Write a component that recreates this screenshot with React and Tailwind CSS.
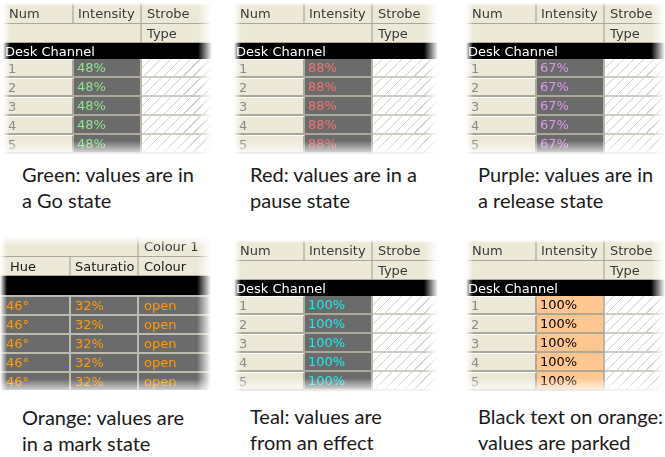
import React from "react";

const HATCH =
  "bg-[repeating-linear-gradient(135deg,#ffffff_0px,#ffffff_6px,#cfcfcf_6px,#cfcfcf_7px)]";

function Fade({ children, className = "", top = "3px" }) {
  return (
    <div
      className={`[mask-image:linear-gradient(to_right,transparent,#000_7px,#000_calc(100%_-_14px),transparent)] ${className}`}
    >
      <div
        className={
          top === "3px"
            ? "[mask-image:linear-gradient(to_bottom,transparent,#000_3px,#000_calc(100%_-_16px),transparent)]"
            : "[mask-image:linear-gradient(to_bottom,transparent,#000_10px,#000_calc(100%_-_16px),transparent)]"
        }
      >
        {children}
      </div>
    </div>
  );
}

function DeskTable({ text, cellBg = "bg-[#6b6b6b]", value, className }) {
  return (
    <Fade className={className}>
      <div className="h-[154px] overflow-hidden font-['DejaVu_Sans',sans-serif] text-[13px] leading-none">
        {/* header */}
        <div className="flex h-[21px] bg-[#ece9d8] text-[#3a3a3a] border-b border-[#aca899]">
          <div className="w-[71px] shrink-0 border-r-2 border-[#c5c2b2] pl-[6px] flex items-center">Num</div>
          <div className="w-[68px] shrink-0 border-r-2 border-[#c5c2b2] pl-[4px] flex items-center">Intensity</div>
          <div className="flex-1 pl-[5px] flex items-center">Strobe</div>
        </div>
        <div className="flex h-[19px] bg-[#ece9d8] text-[#3a3a3a] border-b border-[#aca899]">
          <div className="w-[71px] shrink-0" />
          <div className="w-[68px] shrink-0 border-r-2 border-[#c5c2b2]" />
          <div className="flex-1 pl-[5px] flex items-center">Type</div>
        </div>
        <div className="h-[16px] bg-black text-white pl-[2px] flex items-center">Desk Channel</div>
        {[1, 2, 3, 4, 5].map((n) => (
          <div key={n} className="flex h-[19px]">
            <div className="w-[71px] shrink-0 bg-[#ece9d8] text-[#8c8c8c] border-t border-white border-b-2 border-b-[#aca899] border-r-2 border-r-[#aca899] pl-[5px] flex items-center">
              {n}
            </div>
            <div className={`w-[68px] shrink-0 ${cellBg} ${text} border-b-2 border-[#aca899] border-r-2 border-r-[#b9b6a8] pl-[3px] flex items-center`}>
              {value}
            </div>
            <div className={`flex-1 ${HATCH} border-b-2 border-[#d0cec4]`} />
          </div>
        ))}
      </div>
    </Fade>
  );
}

function ColourTable({ className }) {
  return (
    <Fade className={className} top="10px">
      <div className="h-[159px] overflow-hidden font-['DejaVu_Sans',sans-serif] text-[13px] leading-none">
        <div className="flex h-[21px] bg-[#ece9d8] text-[#3a3a3a] border-b border-[#aca899]">
          <div className="w-[139px] shrink-0 border-r-2 border-[#c5c2b2]" />
          <div className="flex-1 pl-[5px] flex items-center">Colour 1</div>
        </div>
        <div className="flex h-[19px] bg-[#ece9d8] text-[#1a1a1a] border-b border-[#aca899]">
          <div className="w-[71px] shrink-0 border-r-2 border-[#c5c2b2] pl-[10px] flex items-center">Hue</div>
          <div className="w-[68px] shrink-0 border-r-2 border-[#c5c2b2] pl-[4px] flex items-center whitespace-nowrap">
            Saturatio
          </div>
          <div className="flex-1 pl-[5px] flex items-center">Colour</div>
        </div>
        <div className="h-[19px] bg-black" />
        {[1, 2, 3, 4, 5].map((n) => (
          <div key={n} className="flex h-[19px] bg-[#6b6b6b] text-[#ff9a0a] border-t-2 border-[#bdbab0]">
            <div className="w-[71px] shrink-0 border-r-2 border-[#bdbab0] pl-[6px] flex items-center">46°</div>
            <div className="w-[68px] shrink-0 border-r-2 border-[#bdbab0] pl-[4px] flex items-center">32%</div>
            <div className="flex-1 pl-[5px] flex items-center">open</div>
          </div>
        ))}
      </div>
    </Fade>
  );
}

function Caption({ children }) {
  return (
    <p className="pl-[22px] font-['Lato',sans-serif] text-[20px] leading-[26px] text-[#1a1a1a]">
      {children}
    </p>
  );
}

export default function App() {
  return (
    <div className="w-[665px] h-[457px] bg-white overflow-hidden">
      <div className="grid grid-cols-[228px_228px_1fr] pt-[3px] h-[236px]">
        <div>
          <DeskTable text="text-[#8ee68e]" value="48%" className="ml-[3px] w-[209px]" />
          <div className="pt-[4px]">
            <Caption>Green: values are in<br />a Go state</Caption>
          </div>
        </div>
        <div>
          <DeskTable text="text-[#f27272]" value="88%" className="ml-[6px] w-[204px]" />
          <div className="pt-[4px]">
            <Caption>Red: values are in a<br />pause state</Caption>
          </div>
        </div>
        <div>
          <DeskTable text="text-[#dc96ee]" value="67%" className="ml-[10px] w-[199px]" />
          <div className="pt-[4px]">
            <Caption>Purple: values are in<br />a release state</Caption>
          </div>
        </div>
      </div>
      <div className="grid grid-cols-[228px_228px_1fr]">
        <div>
          <ColourTable className="w-[211px]" />
          <div className="pt-[9px]">
            <Caption>Orange: values are<br />in a mark state</Caption>
          </div>
        </div>
        <div className="pt-[4px]">
          <DeskTable text="text-[#16eef0]" value="100%" className="ml-[6px] w-[204px]" />
          <div className="pt-[9px]">
            <Caption>Teal: values are<br />from an effect</Caption>
          </div>
        </div>
        <div className="pt-[4px]">
          <DeskTable text="text-black" cellBg="bg-[#ffc690]" value="100%" className="ml-[10px] w-[199px]" />
          <div className="pt-[9px]">
            <Caption>Black text on orange:<br />values are parked</Caption>
          </div>
        </div>
      </div>
    </div>
  );
}
